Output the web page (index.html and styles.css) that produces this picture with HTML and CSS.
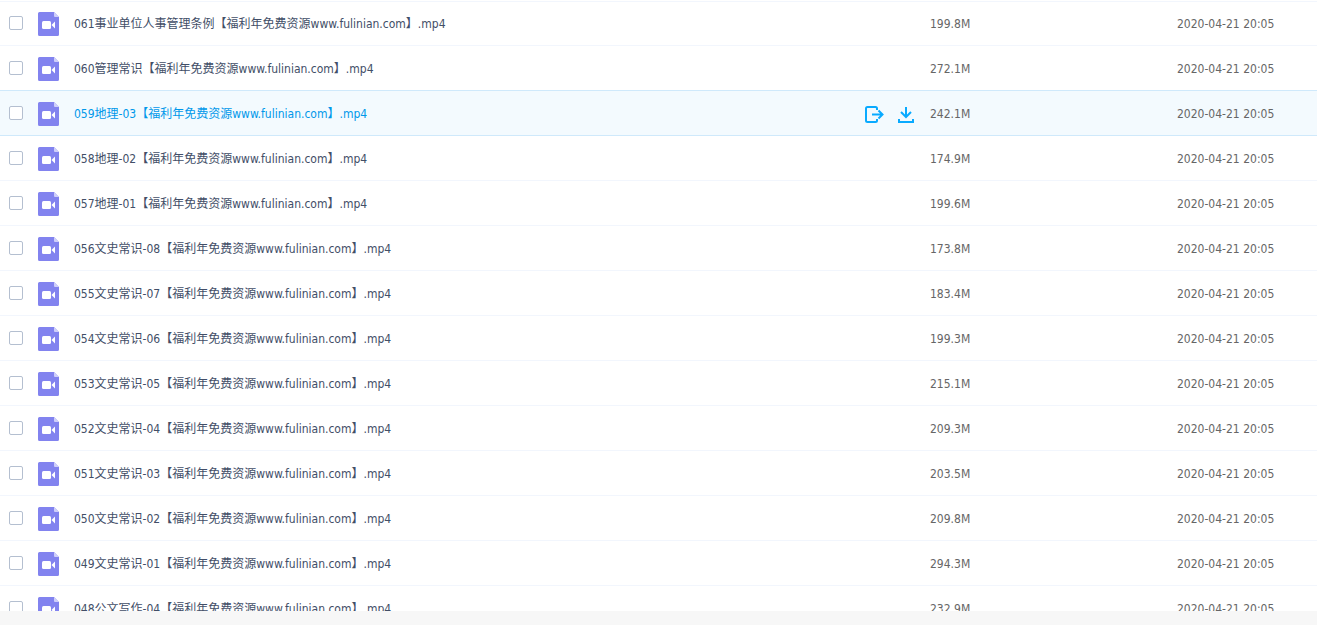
FILE: index.html
```html
<!DOCTYPE html>
<html lang="zh-CN">
<head>
  <meta charset="UTF-8">
  <meta name="viewport" content="width=device-width, initial-scale=1.0">
  <title>文件列表</title>
  <link rel="stylesheet" href="styles.css">
</head>
<body>
  <main class="file-list">
    <table class="files">
      <tbody id="rows"></tbody>
    </table>
  </main>
  <footer class="bottom-bar"></footer>

  <template id="row-template">
    <tr class="row">
      <td class="check"><input type="checkbox"></td>
      <td class="name">
        <div class="name-inner">
          <svg class="file-icon" viewBox="0 0 21 24" aria-hidden="true">
            <path fill="#8283ef" d="M1.500 0H16l5 5v17.500a1.500 1.500 0 0 1-1.500 1.500h-18A1.500 1.500 0 0 1 0 22.500v-21A1.500 1.500 0 0 1 1.500 0z"/>
            <path fill="#cfcffa" d="M16 0l5 5h-4a1 1 0 0 1-1-1z"/>
            <rect fill="#fff" x="4" y="9" width="9" height="8" rx="1.5"/>
            <path fill="#fff" d="M13.500 13l3.500-3.500v7z"/>
          </svg>
          <a class="file-name" href="#"></a>
          <span class="actions"></span>
        </div>
      </td>
      <td class="size"></td>
      <td class="date"></td>
    </tr>
  </template>

  <template id="actions-template">
    <button type="button" class="action" aria-label="分享">
      <svg viewBox="0 0 18 18" fill="none" stroke="#09aaff" stroke-width="2" aria-hidden="true">
        <path d="M12 5V3.500Q12 2 10.500 2H2.500Q1 2 1 3.500v12Q1 17 2.500 17h8q1.500 0 1.500-1.500V14"/>
        <path d="M7 9.500h10M13.500 5.500l4 4-4 4"/>
      </svg>
    </button>
    <button type="button" class="action" aria-label="下载">
      <svg viewBox="0 0 18 18" fill="none" stroke="#09aaff" stroke-width="2" aria-hidden="true">
        <path d="M9 2v9M4 7l5 5 5-5M2 14v3h14v-3"/>
      </svg>
    </button>
  </template>

  <script src="script.js"></script>
</body>
</html>
```

FILE: styles.css
```css
* {
  box-sizing: border-box;
}

body {
  display: flex;
  flex-direction: column;
  height: 100vh;
  margin: 0;
  font-family: "DejaVu Sans Condensed", "Noto Sans", "Noto Sans CJK SC", sans-serif;
  font-size: 12px;
  color: #666;
  background: #fff;
}

.file-list {
  flex: 1;
  min-height: 0;
  padding-top: 1px;
  overflow: hidden;
}

.files {
  width: 100%;
  table-layout: fixed;
  border-spacing: 0;
}

.row td {
  height: 45px;
  padding: 2px 0 0;
  line-height: 20px;
  border-bottom: 1px solid #f2f6fd;
}

.row:first-child td {
  box-shadow: inset 0 1px #f2f6fd;
}

.row.active td {
  background: #f3fafe;
}

.row.active td,
.row.before-active td {
  border-bottom-color: #cfe9fb;
}

.row .check {
  width: 38px;
  padding: 0 0 0 9px;
}

.check input {
  display: block;
  appearance: none;
  width: 14px;
  height: 14px;
  margin: 0;
  background: #fff;
  border: 1px solid #b4bfd0;
  border-radius: 2px;
}

.files .size {
  width: 247px;
}

.files .date {
  width: 140px;
}

.name-inner {
  display: flex;
  align-items: center;
}

.file-icon {
  width: 21px;
  height: 24px;
  margin-right: 15px;
}

.file-name {
  color: #424e67;
  text-decoration: none;
}

.active .file-name {
  color: #0098ea;
}

.actions {
  display: flex;
  gap: 14px;
  margin-left: auto;
  margin-right: 15px;
}

.action {
  width: 18px;
  height: 18px;
  padding: 0;
  background: none;
  border: 0;
}

.action svg {
  display: block;
  width: 18px;
  height: 18px;
  overflow: visible;
}

.bottom-bar {
  height: 14px;
  background: #f7f7f7;
}
```

FILE: script.js
```js
const files = [
  ['061事业单位人事管理条例', '199.8M'],
  ['060管理常识', '272.1M'],
  ['059地理-03', '242.1M'],
  ['058地理-02', '174.9M'],
  ['057地理-01', '199.6M'],
  ['056文史常识-08', '173.8M'],
  ['055文史常识-07', '183.4M'],
  ['054文史常识-06', '199.3M'],
  ['053文史常识-05', '215.1M'],
  ['052文史常识-04', '209.3M'],
  ['051文史常识-03', '203.5M'],
  ['050文史常识-02', '209.8M'],
  ['049文史常识-01', '294.3M'],
  ['048公文写作-04', '232.9M']
];
const activeIndex = 2;

const rows = document.getElementById('rows');
const rowTemplate = document.getElementById('row-template');
const actionsTemplate = document.getElementById('actions-template');

files.forEach(([title, size], i) => {
  const row = rowTemplate.content.cloneNode(true).querySelector('tr');
  const name = title + '【福利年免费资源www.fulinian.com】.mp4';
  row.querySelector('.file-name').textContent = name;
  row.querySelector('input').setAttribute('aria-label', name);
  row.querySelector('.size').textContent = size;
  row.querySelector('.date').textContent = '2020-04-21 20:05';
  if (i === activeIndex) {
    row.classList.add('active');
    row.querySelector('.actions').append(actionsTemplate.content.cloneNode(true));
  }
  if (i === activeIndex - 1) {
    row.classList.add('before-active');
  }
  rows.append(row);
});
```
